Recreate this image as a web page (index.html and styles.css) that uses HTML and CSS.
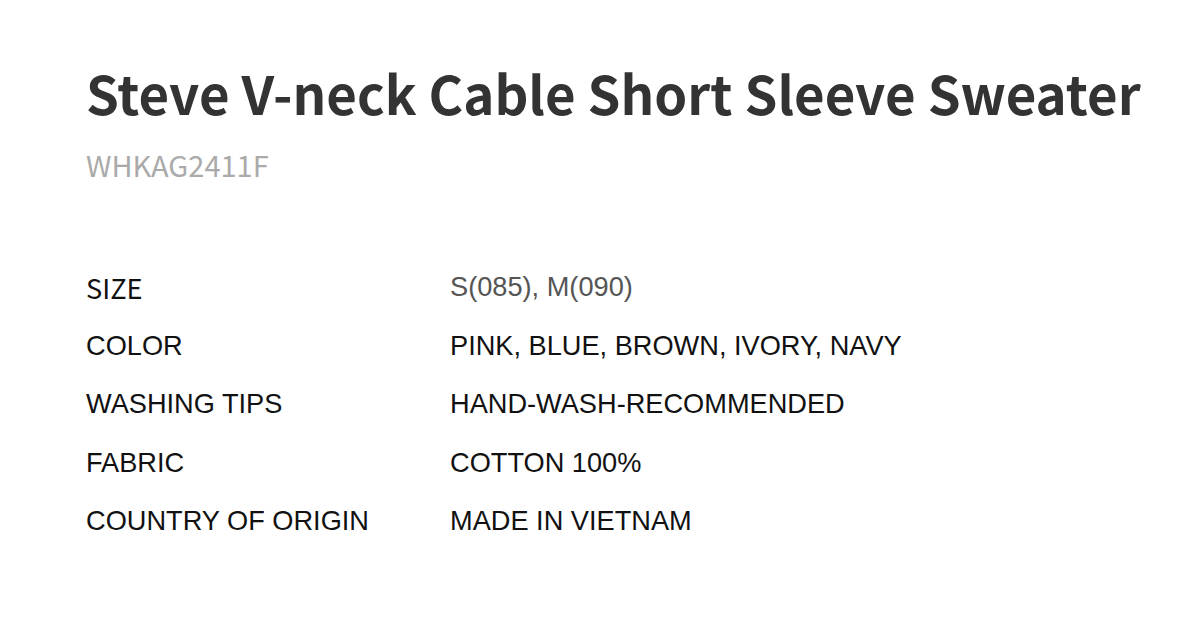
FILE: index.html
```html
<!DOCTYPE html>
<html>
<head>
<meta charset="utf-8">
<link rel="stylesheet" href="styles.css">
</head>
<body>
<div class="product">
  <h1 class="title">Steve V-neck Cable Short Sleeve Sweater</h1>
  <div class="sku">WHKAG2411F</div>
  <dl class="specs">
    <div class="row"><dt class="label label-cjk">SIZE</dt><dd class="value value-muted">S(085), M(090)</dd></div>
    <div class="row"><dt class="label">COLOR</dt><dd class="value">PINK, BLUE, BROWN, IVORY, NAVY</dd></div>
    <div class="row"><dt class="label">WASHING TIPS</dt><dd class="value">HAND-WASH-RECOMMENDED</dd></div>
    <div class="row"><dt class="label">FABRIC</dt><dd class="value">COTTON 100%</dd></div>
    <div class="row"><dt class="label">COUNTRY OF ORIGIN</dt><dd class="value">MADE IN VIETNAM</dd></div>
  </dl>
</div>
</body>
</html>
```

FILE: styles.css
```css
html, body {
  margin: 0;
  padding: 0;
  background: #ffffff;
}

.product {
  padding: 57px 0 0 86px;
}

.title {
  margin: 0;
  font-family: "Noto Sans CJK KR", "Noto Sans", sans-serif;
  font-weight: 700;
  font-size: 52.75px;
  line-height: 70px;
  color: #333333;
  white-space: nowrap;
}

.sku {
  margin-top: 19px;
  font-family: "Noto Sans CJK KR", "Noto Sans", sans-serif;
  font-size: 29px;
  line-height: 36px;
  color: #aaaaaa;
}

.specs {
  margin: 87px 0 0 0;
  display: flex;
  flex-direction: column;
}

.row {
  display: grid;
  grid-template-columns: 364px 1fr;
  height: 58.5px;
  align-items: start;
}

.label, .value {
  margin: 0;
  font-family: "Liberation Sans", Arial, sans-serif;
  font-size: 27.2px;
  line-height: 36px;
  color: #111111;
}

.label-cjk {
  font-family: "Noto Sans CJK KR", "Noto Sans", sans-serif;
}

.value-muted {
  color: #555555;
}
```
